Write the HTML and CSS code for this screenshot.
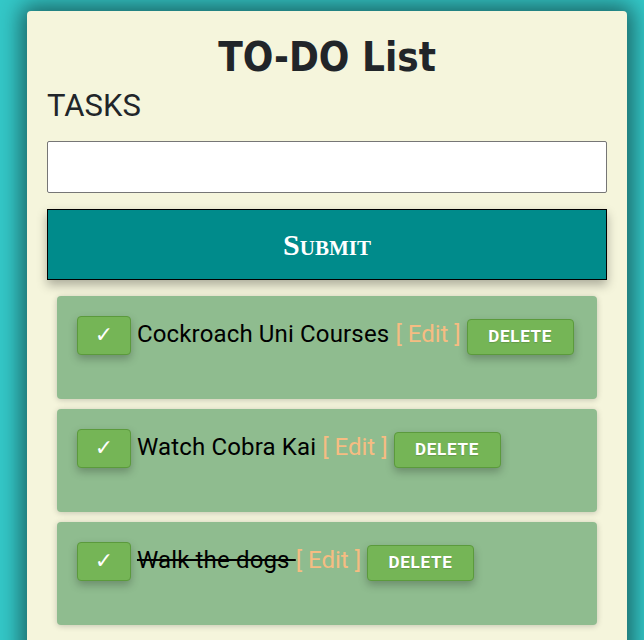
FILE: index.html
```html
<!DOCTYPE html>
<html lang="en">
<head>
<meta charset="utf-8">
<title>TO-DO List</title>
<link rel="stylesheet" href="styles.css">
</head>
<body>
<div class="card">
  <h1 class="title">TO-DO List</h1>
  <h2 class="label">TASKS</h2>
  <input class="task-input" type="text">
  <button class="submit">Submit</button>
  <ul class="tasks">
    <li class="task"><button class="check">✓</button> <span class="name">Cockroach Uni Courses </span><span class="edit">[ Edit ]</span> <button class="delete">DELETE</button></li>
    <li class="task"><button class="check">✓</button> <span class="name">Watch Cobra Kai </span><span class="edit">[ Edit ]</span> <button class="delete">DELETE</button></li>
    <li class="task"><button class="check">✓</button> <span class="name done">Walk the dogs </span><span class="edit">[ Edit ]</span> <button class="delete">DELETE</button></li>
  </ul>
</div>
</body>
</html>
```
FILE: styles.css
```css
html, body {
  margin: 0;
  padding: 0;
  overflow: hidden;
}
body {
  background: #34c8c8;
  height: 640px;
}
.card {
  box-sizing: border-box;
  width: 600px;
  margin: 11px 0 0 27px;
  padding: 22px 20px 40px;
  background: #f5f5dc;
  border-radius: 4px;
  box-shadow: 0 0 22px 6px rgba(0, 0, 0, 0.5);
  min-height: 700px;
}
.title {
  margin: 0;
  font-family: "DejaVu Sans Condensed", "DejaVu Sans", sans-serif;
  font-stretch: condensed;
  font-weight: bold;
  font-size: 40px;
  line-height: 48px;
  text-align: center;
  color: #212529;
}
.label {
  margin: 7px 0 0;
  font-family: Roboto, sans-serif;
  font-weight: 400;
  font-size: 31px;
  line-height: 36px;
  color: #212529;
}
.task-input {
  display: block;
  box-sizing: border-box;
  width: 100%;
  height: 52px;
  margin: 17px 0 0;
  border: 1px solid #767676;
  border-radius: 2px;
  background: #fff;
}
.submit {
  display: block;
  box-sizing: border-box;
  width: 100%;
  height: 71px;
  margin: 16px 0 0;
  border: 1px solid #000;
  background: #008b8b;
  color: #fff;
  font-family: "Liberation Serif", serif;
  font-weight: bold;
  font-size: 30px;
  font-variant: small-caps;
  box-shadow: 0 5px 10px rgba(0, 0, 0, 0.3);
  padding: 0;
}
.tasks {
  list-style: none;
  margin: 16px 10px 0;
  padding: 0;
  display: flex;
  flex-direction: column;
  gap: 10px;
}
.task {
  box-sizing: border-box;
  height: 103px;
  padding: 20px;
  background: #8fbc8f;
  border-radius: 4px;
  box-shadow: 0 1px 6px rgba(0, 0, 0, 0.2);
  font-family: Roboto, sans-serif;
  font-size: 24px;
  color: #000;
}
.check, .delete {
  box-sizing: border-box;
  display: inline-block;
  vertical-align: baseline;
  background: #75b556;
  border: 1px solid #5b9a3c;
  border-radius: 4px;
  color: #fff;
  font-family: Roboto, "DejaVu Sans", sans-serif;
  box-shadow: 0 4px 8px rgba(0, 0, 0, 0.25);
  margin: 0;
  text-align: center;
}
.check {
  width: 54px;
  padding: 5px 0 6px;
  font-size: 22px;
  line-height: 26px;
}
.delete {
  width: 107px;
  padding: 6px 0 7.5px;
  font-size: 17px;
  line-height: 20px;
  font-weight: bold;
  letter-spacing: 0.7px;
  text-shadow: 0 1px 1px rgba(0, 0, 0, 0.15);
}
.name {
  letter-spacing: 0.15px;
}
.done {
  text-decoration: line-through;
}
.edit {
  color: #f6bc82;
}
```
